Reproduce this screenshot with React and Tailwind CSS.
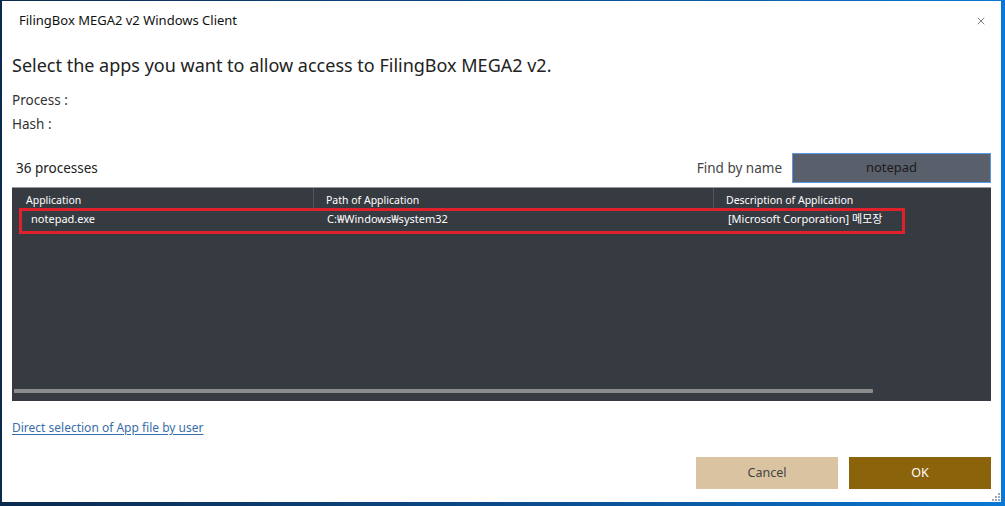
import { X } from "lucide-react";

const font = { fontFamily: '"Noto Sans", "Noto Sans CJK KR", sans-serif' };

const rows = [
  { app: "notepad.exe", path: "C:₩Windows₩system32", desc: "[Microsoft Corporation] 메모장" },
];

const Grip = () => (
  <svg width="10" height="10" viewBox="0 0 10 10" className="absolute right-[1px] bottom-[1px]">
    {[
      [8, 2], [5, 5], [8, 5], [2, 8], [5, 8], [8, 8],
    ].map(([x, y], i) => (
      <rect key={i} x={x} y={y} width="2" height="2" fill="#a0a8b8" />
    ))}
  </svg>
);

export default function App() {
  return (
    <div className="w-[1005px] h-[506px] bg-gradient-to-r from-[#0b2a4e] via-[#0b4a8a] to-[#0a78d4] pt-[1px] pl-[2px] pr-[4px] pb-[4px]" style={font}>
      <div className="relative w-full h-full bg-white flex flex-col">
        <div className="flex items-center justify-between h-[40px] pl-[17px] pr-[14px]">
          <span className="text-[13px] text-[#111]">FilingBox MEGA2 v2 Windows Client</span>
          <X size={12} strokeWidth={1.5} className="text-[#555]" />
        </div>
        <div className="px-[10px]">
          <h1 className="text-[18px] text-[#222] leading-[26px] mt-[11px]">
            Select the apps you want to allow access to FilingBox MEGA2 v2.
          </h1>
          <div className="mt-[10px] text-[13.5px] text-[#333] leading-[24px]">
            <div>Process :</div>
            <div>Hash :</div>
          </div>
          <div className="flex items-center justify-between mt-[17px] h-[30px]">
            <span className="pl-[4px] text-[13.5px] text-[#222]">36 processes</span>
            <div className="flex items-center gap-[10px]">
              <span className="text-[13.5px] text-[#444]">Find by name</span>
              <div className="w-[199px] h-[30px] bg-[#5a606b] border border-[#5a9ae0] flex items-center justify-center text-[13px] text-[#1a1a1a]">
                notepad
              </div>
            </div>
          </div>
          <div className="relative mt-[4px] h-[214px] bg-[#363a41] border-t border-[#9a9a9a]">
            <div className="grid grid-cols-[302px_400px_1fr] h-[20px] text-[10.5px] text-white">
              <div className="pl-[14px] pt-[5px] border-r border-[#505560]">Application</div>
              <div className="pl-[12px] pt-[5px] border-r border-[#505560]">Path of Application</div>
              <div className="pl-[12px] pt-[5px]">Description of Application</div>
            </div>
            {rows.map((r) => (
              <div key={r.app} className="ml-[7px] w-[886px] h-[26px] border-[3px] border-[#e0202a] grid grid-cols-[292px_400px_1fr] items-center pb-[5px] text-[11px] text-white">
                <div className="pl-[9px]">{r.app}</div>
                <div className="pl-[13px]">{r.path}</div>
                <div className="pl-[14px]">{r.desc}</div>
              </div>
            ))}
            <div className="absolute left-[2px] bottom-[8px] w-[859px] h-[4px] bg-[#8c8c8c] rounded-r-[1px]" />
          </div>
          <div className="mt-[13px]">
            <a className="text-[12px] text-[#3a6ea8] underline underline-offset-2 decoration-[#3a6ea8]">
              Direct selection of App file by user
            </a>
          </div>
          <div className="flex justify-end gap-[11px] mt-[19px]">
            <button className="w-[142px] h-[32px] bg-[#d9c3a0] text-[12.5px] text-[#444]">Cancel</button>
            <button className="w-[142px] h-[32px] bg-[#8b630b] text-[12.5px] text-white">OK</button>
          </div>
        </div>
        <Grip />
      </div>
    </div>
  );
}
